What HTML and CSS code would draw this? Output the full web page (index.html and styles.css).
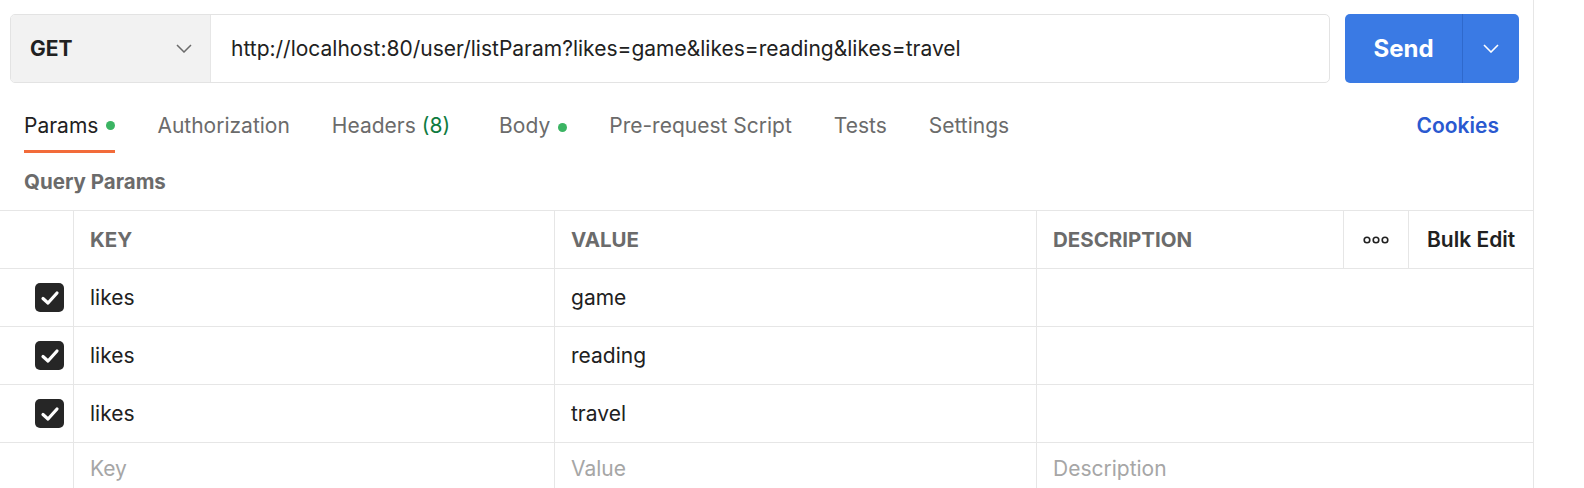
FILE: index.html
```html
<!DOCTYPE html>
<html>
<head>
<meta charset="utf-8">
<link rel="stylesheet" href="styles.css">
</head>
<body>
<div class="app">
  <div class="main">
    <div class="reqbar">
      <div class="urlbox">
        <div class="method">
          <span class="method-name">GET</span>
          <svg class="chev" width="16" height="9" viewBox="0 0 16 9"><path d="M1 1 L8 8 L15 1" fill="none" stroke="#6b6b6b" stroke-width="1.5"/></svg>
        </div>
        <div class="url">http://localhost:80/user/listParam?likes=game&amp;likes=reading&amp;likes=travel</div>
      </div>
      <div class="send">
        <span class="send-label">Send</span>
        <span class="send-more"><svg width="16" height="9" viewBox="0 0 16 9"><path d="M1 1 L8 8 L15 1" fill="none" stroke="#fff" stroke-width="1.6"/></svg></span>
      </div>
    </div>
    <div class="tabs">
      <div class="tab active">Params<span class="dot"></span></div>
      <div class="tab">Authorization</div>
      <div class="tab tab-headers">Headers <span class="count">(8)</span></div>
      <div class="tab">Body<span class="dot"></span></div>
      <div class="tab">Pre-request Script</div>
      <div class="tab">Tests</div>
      <div class="tab">Settings</div>
      <div class="spacer"></div>
      <div class="cookies">Cookies</div>
    </div>
    <div class="section-title">Query Params</div>
    <div class="table">
      <div class="row head">
        <div class="c c-chk"></div>
        <div class="c c-key">KEY</div>
        <div class="c c-val">VALUE</div>
        <div class="c c-desc">DESCRIPTION</div>
        <div class="c c-more"><svg width="26" height="8" viewBox="0 0 26 8"><circle cx="4" cy="4" r="2.8" fill="none" stroke="#212121" stroke-width="1.6"/><circle cx="13" cy="4" r="2.8" fill="none" stroke="#212121" stroke-width="1.6"/><circle cx="22" cy="4" r="2.8" fill="none" stroke="#212121" stroke-width="1.6"/></svg></div>
        <div class="c c-bulk">Bulk Edit</div>
      </div>
      <div class="row">
        <div class="c c-chk"><span class="box"><svg width="20" height="16" viewBox="0 0 20 16"><path d="M3 8.5 L8 13 L17 3" fill="none" stroke="#fff" stroke-width="3.2" stroke-linecap="round" stroke-linejoin="round"/></svg></span></div>
        <div class="c c-key">likes</div>
        <div class="c c-val">game</div>
        <div class="c c-rest"></div>
      </div>
      <div class="row">
        <div class="c c-chk"><span class="box"><svg width="20" height="16" viewBox="0 0 20 16"><path d="M3 8.5 L8 13 L17 3" fill="none" stroke="#fff" stroke-width="3.2" stroke-linecap="round" stroke-linejoin="round"/></svg></span></div>
        <div class="c c-key">likes</div>
        <div class="c c-val">reading</div>
        <div class="c c-rest"></div>
      </div>
      <div class="row">
        <div class="c c-chk"><span class="box"><svg width="20" height="16" viewBox="0 0 20 16"><path d="M3 8.5 L8 13 L17 3" fill="none" stroke="#fff" stroke-width="3.2" stroke-linecap="round" stroke-linejoin="round"/></svg></span></div>
        <div class="c c-key">likes</div>
        <div class="c c-val">travel</div>
        <div class="c c-rest"></div>
      </div>
      <div class="row ph">
        <div class="c c-chk"></div>
        <div class="c c-key">Key</div>
        <div class="c c-val">Value</div>
        <div class="c c-rest">Description</div>
      </div>
    </div>
  </div>
  <div class="side"></div>
</div>
</body>
</html>
```

FILE: styles.css
```css
* { box-sizing: border-box; }
html, body { margin: 0; padding: 0; background: #fff; }
body {
  font-family: Inter, "Noto Sans", sans-serif;
  color: #212121;
  width: 1584px;
  height: 488px;
  overflow: hidden;
}
.app { display: flex; height: 488px; }
.main {
  width: 1534px;
  border-right: 1px solid #e6e6e6;
  height: 488px;
  overflow: hidden;
}
.side { flex: 1; }

.reqbar {
  display: flex;
  padding: 14px 0 0 10px;
  height: 83px;
}
.urlbox {
  width: 1320px;
  height: 69px;
  border: 1px solid #e3e3e3;
  border-radius: 5px;
  display: flex;
  overflow: hidden;
}
.method {
  width: 200px;
  background: #f2f2f2;
  border-right: 1px solid #e6e6e6;
  display: flex;
  align-items: center;
  padding: 0 18px 0 19px;
}
.method-name {
  font-weight: 700;
  font-size: 21px;
  flex: 1;
  color: #212121;
}
.chev { display: block; }
.url {
  display: flex;
  align-items: center;
  padding-left: 20px;
  font-size: 21px;
  color: #212121;
}
.send {
  margin-left: 15px;
  width: 174px;
  height: 69px;
  background: #3a7ae4;
  border-radius: 5px;
  display: flex;
  color: #fff;
}
.send-label {
  width: 118px;
  display: flex;
  align-items: center;
  justify-content: center;
  font-weight: 700;
  font-size: 24px;
  border-right: 1px solid #2f69cc;
}
.send-more {
  flex: 1;
  display: flex;
  align-items: center;
  justify-content: center;
}
.send-more svg { display: block; }

.tabs {
  display: flex;
  align-items: flex-start;
  padding-left: 24px;
  height: 70px;
  padding-top: 30px;
}
.tab {
  font-size: 21px;
  color: #6b6b6b;
  margin-right: 42px;
  height: 40px;
  line-height: 26px;
  display: flex;
  align-items: baseline;
}
.tab-headers { margin-right: 49px; }
.tab.active { color: #212121; border-bottom: 3px solid #f26b3a; }
.count { color: #0f7b3f; margin-left: 6px; }
.dot {
  width: 9px; height: 9px; border-radius: 50%;
  background: #3bb463;
  display: inline-block;
  margin-left: 8px;
  align-self: center;
  margin-top: -12px;
}
.spacer { flex: 1; }
.cookies {
  font-size: 21px;
  font-weight: 600;
  color: #2a59d0;
  line-height: 26px;
  margin-right: 34px;
}

.section-title {
  font-size: 20.5px;
  font-weight: 700;
  color: #6b6b6b;
  padding-left: 24px;
  height: 20px;
  line-height: 20px;
  margin-top: 19px;
  margin-bottom: 18px;
}

.table { border-top: 1px solid #e6e6e6; }
.row {
  display: flex;
  height: 58px;
  border-bottom: 1px solid #e6e6e6;
}
.c {
  display: flex;
  align-items: center;
  font-size: 21px;
  border-right: 1px solid #e6e6e6;
  padding-left: 16px;
}
.c-chk { width: 74px; padding-left: 0; justify-content: flex-end; padding-right: 9px; }
.c-key { width: 481px; }
.c-val { width: 482px; }
.c-desc { width: 307px; }
.c-more { width: 65px; justify-content: center; padding-left: 0; }
.c-bulk { flex: 1; border-right: none; padding-left: 18px; font-weight: 600; color: #212121; }
.c-rest { flex: 1; border-right: none; }
.head .c-key, .head .c-val, .head .c-desc {
  font-weight: 700;
  color: #6b6b6b;
  font-size: 20.5px;
}
.ph .c { color: #a6a6a6; padding-bottom: 6px; }
.box {
  width: 29px;
  height: 29px;
  border-radius: 5px;
  background: #262626;
  display: flex;
  align-items: center;
  justify-content: center;
}
.box svg { display: block; }
```
